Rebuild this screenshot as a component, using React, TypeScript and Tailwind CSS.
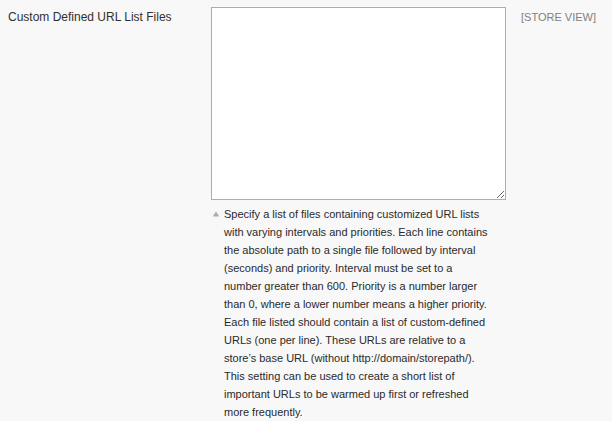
import React from "react"

export default function App() {
    return (
        <div className="w-[612px] h-[421px] bg-[#f8f8f8] overflow-hidden" style={{ fontFamily: "'Liberation Sans', Arial, sans-serif" }}>
            <div className="flex pt-[7px]">
                <div className="w-[211px] pl-[8px] pt-[1px] text-[12px] text-[#303030] leading-[18px]">Custom Defined URL List Files</div>
                <div className="w-[295px] flex flex-col">
                    <textarea className="w-[295px] h-[193px] bg-white border border-[#adadad] outline-none resize-y block" />
                    <div className="flex mt-[5px] text-[11px] leading-[18px] text-[#2a2a2a]">
                        <span className="w-[13px] pl-[1px] pt-[6px]">
                            <svg width="8" height="6" viewBox="0 0 8 6" className="block">
                                <path d="M4 0.5 L7.5 5.5 L0.5 5.5 Z" fill="#a9b1b7" />
                            </svg>
                        </span>
                        <p className="w-[266px]">
                            Specify a list of files containing customized URL lists with varying intervals and priorities. Each line contains the absolute path to a single file followed by interval (seconds) and priority. Interval must be set to a number greater than 600. Priority is a number larger than 0, where a lower number means a higher priority. Each file listed should contain a list of custom-defined URLs (one per line). These URLs are relative to a store’s base URL (without http://domain/storepath/). This setting can be used to create a short list of important URLs to be warmed up first or refreshed more frequently.
                        </p>
                    </div>
                </div>
                <div className="pl-[15px] pt-[1px] text-[11px] leading-[18px] text-[#808080]">[STORE VIEW]</div>
            </div>
        </div>
    )
}
